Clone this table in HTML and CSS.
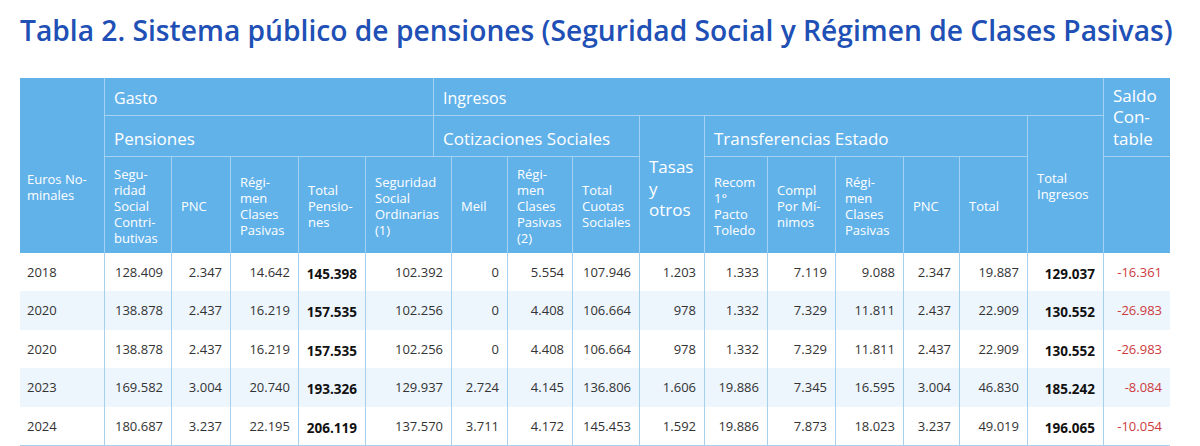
FILE: index.html
```html
<!DOCTYPE html>
<html lang="es">
<head>
<meta charset="utf-8">
<title>Tabla 2. Sistema público de pensiones</title>
<link rel="stylesheet" href="styles.css">
</head>
<body>
<main class="page">
  <h1 class="title">Tabla 2. Sistema público de pensiones (Seguridad Social y Régimen de Clases Pasivas)</h1>
  <div class="table">
    <div class="head">
      <div class="hc rows3 corner">Euros No-<br>minales</div>
      <div class="hc cols5 big1">Gasto</div>
      <div class="hc cols11 big1">Ingresos</div>
      <div class="hc rows2 big2 saldo">Saldo<br>Con-<br>table</div>

      <div class="hc cols5 big2">Pensiones</div>
      <div class="hc cols4 big2">Cotizaciones Sociales</div>
      <div class="hc rows2 big2 tasas">Tasas<br>y<br>otros</div>
      <div class="hc cols5 big2">Transferencias Estado</div>
      <div class="hc rows2 small">Total<br>Ingresos</div>

      <div class="hc small">Segu-<br>ridad<br>Social<br>Contri-<br>butivas</div>
      <div class="hc small">PNC</div>
      <div class="hc small">Régi-<br>men<br>Clases<br>Pasivas</div>
      <div class="hc small">Total<br>Pensio-<br>nes</div>
      <div class="hc cols2 small">Seguridad<br>Social<br>Ordinarias<br>(1)</div>
      <div class="hc small">Meil</div>
      <div class="hc small">Régi-<br>men<br>Clases<br>Pasivas<br>(2)</div>
      <div class="hc small">Total<br>Cuotas<br>Sociales</div>
      <div class="hc small">Recom<br>1°<br>Pacto<br>Toledo</div>
      <div class="hc small">Compl<br>Por Mí-<br>nimos</div>
      <div class="hc small">Régi-<br>men<br>Clases<br>Pasivas</div>
      <div class="hc small">PNC</div>
      <div class="hc small">Total</div>
      <div class="hc small"></div>
    </div>

    <div class="body">
      <div class="row h38">
        <div class="c year">2018</div><div class="c">128.409</div><div class="c">2.347</div><div class="c">14.642</div><div class="c strong">145.398</div><div class="c">102.392</div><div class="c">0</div><div class="c">5.554</div><div class="c">107.946</div><div class="c">1.203</div><div class="c">1.333</div><div class="c">7.119</div><div class="c">9.088</div><div class="c">2.347</div><div class="c">19.887</div><div class="c strong">129.037</div><div class="c neg">-16.361</div>
      </div>
      <div class="row alt h39">
        <div class="c year">2020</div><div class="c">138.878</div><div class="c">2.437</div><div class="c">16.219</div><div class="c strong">157.535</div><div class="c">102.256</div><div class="c">0</div><div class="c">4.408</div><div class="c">106.664</div><div class="c">978</div><div class="c">1.332</div><div class="c">7.329</div><div class="c">11.811</div><div class="c">2.437</div><div class="c">22.909</div><div class="c strong">130.552</div><div class="c neg">-26.983</div>
      </div>
      <div class="row h38">
        <div class="c year">2020</div><div class="c">138.878</div><div class="c">2.437</div><div class="c">16.219</div><div class="c strong">157.535</div><div class="c">102.256</div><div class="c">0</div><div class="c">4.408</div><div class="c">106.664</div><div class="c">978</div><div class="c">1.332</div><div class="c">7.329</div><div class="c">11.811</div><div class="c">2.437</div><div class="c">22.909</div><div class="c strong">130.552</div><div class="c neg">-26.983</div>
      </div>
      <div class="row alt h39">
        <div class="c year">2023</div><div class="c">169.582</div><div class="c">3.004</div><div class="c">20.740</div><div class="c strong">193.326</div><div class="c">129.937</div><div class="c">2.724</div><div class="c">4.145</div><div class="c">136.806</div><div class="c">1.606</div><div class="c">19.886</div><div class="c">7.345</div><div class="c">16.595</div><div class="c">3.004</div><div class="c">46.830</div><div class="c strong">185.242</div><div class="c neg">-8.084</div>
      </div>
      <div class="row h38">
        <div class="c year">2024</div><div class="c">180.687</div><div class="c">3.237</div><div class="c">22.195</div><div class="c strong">206.119</div><div class="c">137.570</div><div class="c">3.711</div><div class="c">4.172</div><div class="c">145.453</div><div class="c">1.592</div><div class="c">19.886</div><div class="c">7.873</div><div class="c">18.023</div><div class="c">3.237</div><div class="c">49.019</div><div class="c strong">196.065</div><div class="c neg">-10.054</div>
      </div>
    </div>
  </div>
</main>
</body>
</html>
```
FILE: styles.css
```css
* { box-sizing: border-box; }

html, body {
  margin: 0;
  padding: 0;
  background: #ffffff;
}

body {
  font-family: "Open Sans", "Noto Sans", "DejaVu Sans", sans-serif;
  color: #333333;
}

.page {
  padding: 12px 20px 0 20px;
  width: 1200px;
}

.title {
  margin: 0;
  font-size: 28.2px;
  line-height: 36px;
  font-weight: 600;
  color: #2050b5;
  white-space: nowrap;
  letter-spacing: 0;
}

.table {
  margin-top: 30px;
  width: 1150px;
}

/* header grid: gap lines drawn by background */
.head {
  display: grid;
  grid-template-columns: 84px 66px 58px 67px 66px 67px 17px 55px 64px 66px 64px 62px 67px 67px 55px 67px 75px 66px;
  grid-template-rows: 37px 40px 96px;
  gap: 1px;
  background: #a3d2f3;
}

.hc {
  background: #62b2ea;
  color: #ffffff;
  display: flex;
  align-items: center;
  padding: 0 8px 0 9px;
  font-weight: 400;
}

.cols2 { grid-column: span 2; }
.cols4 { grid-column: span 4; }
.cols5 { grid-column: span 5; }
.cols11 { grid-column: span 11; }
.rows2 { grid-row: span 2; }
.rows3 { grid-row: span 3; }

.big1 {
  font-size: 16px;
  line-height: 20px;
  padding-top: 2px;
}

.big2 {
  font-size: 17px;
  line-height: 21px;
  padding-top: 4px;
}

.small {
  font-size: 13px;
  line-height: 16px;
  padding-top: 2px;
}

.corner {
  font-size: 13px;
  line-height: 16px;
  padding-top: 42px;
  padding-left: 7px;
}

.saldo {
  padding-top: 0;
  line-height: 21.5px;
}

.tasas {
  font-size: 17px;
  line-height: 21.5px;
  padding-top: 8px;
}

/* body */
.body {
  border-bottom: 1px solid #a7d0ef;
}

.row {
  display: grid;
  grid-template-columns: 84px 66px 58px 67px 66px 85px 55px 64px 66px 64px 62px 67px 67px 55px 67px 75px 66px;
  column-gap: 1px;
  background: #a7d0ef;
}

.h38 { height: 38px; }
.h39 { height: 39px; }

.c {
  background: #ffffff;
  display: flex;
  align-items: center;
  justify-content: flex-end;
  padding: 0 8px 1px 0;
  font-size: 13px;
  color: #333333;
}

.alt .c {
  background: #edf5fd;
}

.c.year {
  justify-content: flex-start;
  padding-left: 7px;
}

.c.strong {
  font-weight: 700;
  font-size: 13.5px;
  color: #111111;
  padding-top: 4px;
}

.c.neg {
  color: #cc3b40;
}
```
